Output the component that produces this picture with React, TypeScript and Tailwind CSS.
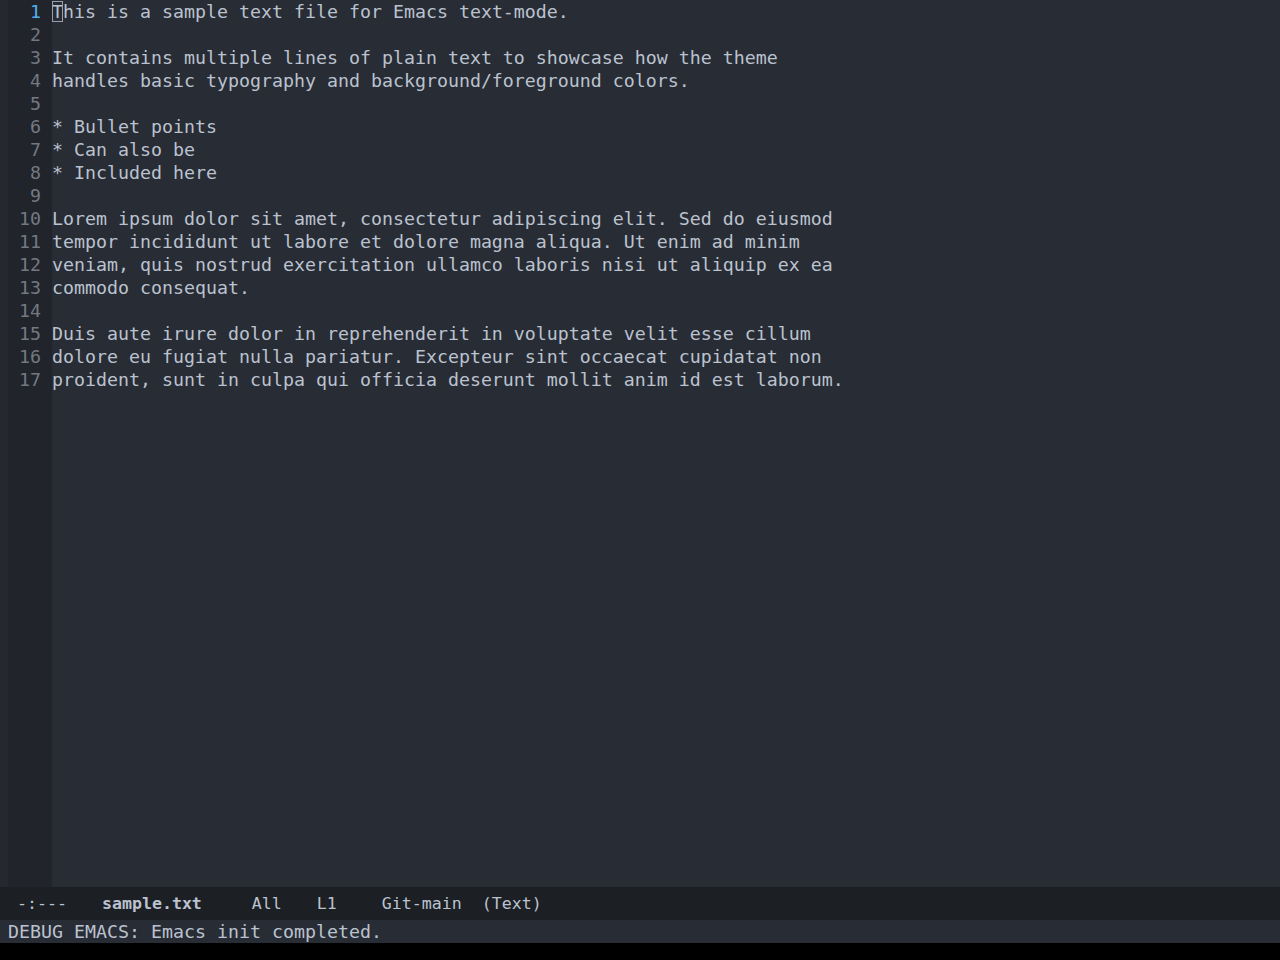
const LINES = [
  'This is a sample text file for Emacs text-mode.',
  '',
  'It contains multiple lines of plain text to showcase how the theme',
  'handles basic typography and background/foreground colors.',
  '',
  '* Bullet points',
  '* Can also be',
  '* Included here',
  '',
  'Lorem ipsum dolor sit amet, consectetur adipiscing elit. Sed do eiusmod',
  'tempor incididunt ut labore et dolore magna aliqua. Ut enim ad minim',
  'veniam, quis nostrud exercitation ullamco laboris nisi ut aliquip ex ea',
  'commodo consequat.',
  '',
  'Duis aute irure dolor in reprehenderit in voluptate velit esse cillum',
  'dolore eu fugiat nulla pariatur. Excepteur sint occaecat cupidatat non',
  'proident, sunt in culpa qui officia deserunt mollit anim id est laborum.',
];

const mono = "font-['DejaVu_Sans_Mono','Liberation_Mono',monospace]";

export default function App() {
  return (
    <div className={`flex h-[960px] w-[1280px] flex-col bg-black ${mono}`}>
      {/* buffer window */}
      <div className="flex h-[887px]">
        <div className="w-[8px] bg-[#25282f]" />
        <div className="w-[44px] bg-[#21242b] pr-[11px] text-right text-[18.27px] leading-[23px] text-[#737983]">
          {LINES.map((_, i) => (
            <div key={i} className={i === 0 ? 'text-[#51afef]' : ''}>
              {i + 1}
            </div>
          ))}
        </div>
        <div className="flex-1 whitespace-pre bg-[#282c34] text-[18.27px] leading-[23px] text-[#bbc2cf]">
          {LINES.map((line, i) => (
            <div key={i} className="h-[23px]">
              {i === 0 ? (
                <>
                  <span className="outline outline-1 -outline-offset-1 outline-[#9aa0a8]">T</span>
                  {line.slice(1)}
                </>
              ) : (
                line
              )}
            </div>
          ))}
        </div>
      </div>

      {/* mode line */}
      <div className="flex h-[33px] items-center whitespace-pre bg-[#1c1f24] pl-[17px] pt-[1px] text-[16.6px] text-[#bbc2cf]">
        <span>-:---</span>
        <span className="ml-[35px] font-bold">sample.txt</span>
        <span className="ml-[50px]">All</span>
        <span className="ml-[35px]">L1</span>
        <span className="ml-[45px]">Git-main</span>
        <span className="ml-[20px]">(Text)</span>
      </div>

      {/* echo area */}
      <div className="h-[23px] whitespace-pre bg-[#282c34] pl-[8px] text-[18.27px] leading-[23px] text-[#bbc2cf]">
        DEBUG EMACS: Emacs init completed.
      </div>
    </div>
  );
}
